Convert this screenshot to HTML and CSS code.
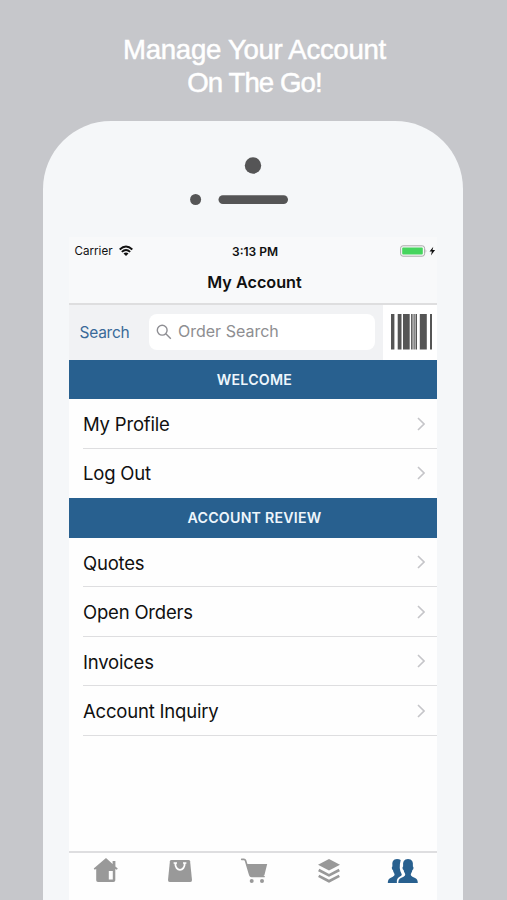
FILE: index.html
```html
<!DOCTYPE html>
<html lang="en">
<head>
<meta charset="utf-8">
<title>My Account</title>
<link rel="stylesheet" href="styles.css">
</head>
<body>
<h1 class="headline"><span class="line-one">Manage Your Account</span><br><span class="line-two">On The Go!</span></h1>
<main class="phone">
  <svg class="hardware" width="420" height="116" viewBox="43 121 420 116" fill="#555556">
    <circle cx="253" cy="165.5" r="8.2"/><circle cx="195.6" cy="199.5" r="5.5"/><rect x="218.5" y="195.2" width="69.5" height="8.8" rx="4.4"/>
  </svg>
  <div class="screen">
    <div class="status">
      <span class="carrier">Carrier</span>
      <svg class="wifi" width="14" height="12" viewBox="0 0 14 12" fill="none" stroke="#111" stroke-width="1.9"><path d="M.7 4.5Q7-1.3 13.3 4.5M2.8 6.9Q7 3.2 11.2 6.9"/><path d="M4.5 8.5Q7 6.5 9.5 8.5L7 11Z" fill="#111" stroke="none"/></svg>
      <span class="time">3:13 PM</span>
      <svg class="battery" width="36" height="12" viewBox="0 0 36 12"><rect x=".6" y=".8" width="24" height="10.4" rx="2.4" fill="#f8f8f8" stroke="#aaa"/><rect x="2.2" y="2.4" width="20.6" height="7.2" rx="1" fill="#46d55e"/><path d="M25.6 4q1.6 2 0 4z" fill="#aaa"/><path d="M33.3 1.7 29.5 6.5h2.4l-1 4 4.2-5.4h-2.6z" fill="#111"/></svg>
    </div>
    <div class="title"><span>My Account</span></div>
    <div class="search">
      <span class="search-label">Search</span>
      <div class="field">
        <svg width="16" height="16" viewBox="0 0 16 16" fill="none" stroke="#8e8e93" stroke-width="1.4"><circle cx="6.2" cy="6.2" r="4.9"/><path d="m9.8 9.8 5 5"/></svg>
        <span>Order Search</span>
      </div>
      <div class="barcode">
        <svg width="42" height="36" viewBox="391 314 42 36" fill="#555"><path d="M391 314h3.4v35.5H391zM397.7 314h3.8v35.5h-3.8zM403 314h6.7v35.5H403zM411.1 314h1.5v35.5h-1.5zM413.5 314h1.2v35.5h-1.2zM415.5 314h1.5v35.5h-1.5zM419.8 314h7v35.5h-7zM430 314h2v35.5h-2z"/></svg>
      </div>
    </div>
    <h2 class="section welcome"><span>WELCOME</span></h2>
    <div class="row"><span class="profile">My Profile</span><svg class="chevron" viewBox="0 0 8 14"><path d="m1 1 6 6-6 6"/></svg></div>
    <div class="row last"><span class="logout">Log Out</span><svg class="chevron" viewBox="0 0 8 14"><path d="m1 1 6 6-6 6"/></svg></div>
    <h2 class="section review"><span>ACCOUNT REVIEW</span></h2>
    <div class="row"><span class="quotes">Quotes</span><svg class="chevron" viewBox="0 0 8 14"><path d="m1 1 6 6-6 6"/></svg></div>
    <div class="row"><span class="orders">Open Orders</span><svg class="chevron" viewBox="0 0 8 14"><path d="m1 1 6 6-6 6"/></svg></div>
    <div class="row"><span class="invoices">Invoices</span><svg class="chevron" viewBox="0 0 8 14"><path d="m1 1 6 6-6 6"/></svg></div>
    <div class="row"><span class="inquiry">Account Inquiry</span><svg class="chevron" viewBox="0 0 8 14"><path d="m1 1 6 6-6 6"/></svg></div>
    <nav class="tabs">
      <svg viewBox="0 0 32 28"><path d="M16 1 3.7 11.500l1 1.300 1.500-.8v11.200q0 1.800 1.800 1.800h15.500q1.800 0 1.800-1.800V12l1.500.8 1-1.300-2.400-2V4h-2.800v3zM18.800 14h4v8.400h-4z" fill-rule="evenodd"/></svg>
      <svg viewBox="0 0 32 28"><path d="M7.3 3h17.4q1.2 0 1.4 1.2L28 23q.1 2-1.7 2H5.7Q3.9 25 4 23L5.9 4.2Q6.1 3 7.3 3Z"/><path d="M11.3 6c-.3 9.2 9.7 9.2 9.4 0" fill="none" stroke="#fff" stroke-width="1.8"/><path d="M9.6 5.2h3.4v1.5H9.6zM19 5.2h3.4v1.5H19z" fill="#fff"/></svg>
      <svg viewBox="0 0 32 28"><path d="M3.700 2.300h2.200q1.200 0 1.600 1.300l4.300 14.200q.5 1.700 1.800 1.700H26" fill="none" stroke="#999" stroke-width="1.700" stroke-linecap="round"/><path d="M8.500 7h20.700l-2.600 10.500q-.4 1.500-1.900 1.500H12z"/><circle cx="13.700" cy="24" r="2"/><circle cx="24" cy="24" r="2"/></svg>
      <svg viewBox="0 0 32 28"><path d="m16 2 11 5.7-11 5.8L5 7.7z"/><path d="m5.7 13 10.3 5.4L26.3 13M5.7 18.9 16 24.3l10.3-5.4" fill="none" stroke="#999" stroke-width="2.7" stroke-linejoin="round"/></svg>
      <svg class="people" viewBox="0 0 32 28"><path d="M.8 26q0-3.800 2.600-5 3-1.300 3.900-2.400.7-1.200-.3-2.600-.8-1.200-1-2.800-1.200-.7-1.200-2.200 0-1 .6-1.400Q4.200 2 10 2q2.300 0 3.700 1.100Q11.300 12 14.800 17.500q.2 1.200-2.600 2.600Q9.400 21.500 9.900 26z"/><path d="M11.300 26q0-3.900 2.600-5 3.300-1.300 4.100-2.500.6-1.200-.3-2.500-.8-1.300-1-2.800-1.200-.7-1.200-2.200 0-1 .6-1.400Q15.100 2 21 2t4.900 7.600q.6.4.6 1.400 0 1.500-1.200 2.200-.2 1.500-1 2.800-.9 1.300-.3 2.500.8 1.200 4.100 2.500 2.700 1.100 2.700 5z"/></svg>
    </nav>
  </div>
</main>
</body>
</html>
```
FILE: styles.css
```css
* { box-sizing: border-box; }
body { margin: 0; height: 900px; overflow: hidden; background: #c6c7cb; font-family: Inter, "Liberation Sans", sans-serif; color: #101010; }
.headline { margin: 0; height: 121px; padding-top: 33px; text-align: center; color: #fff; font: 400 27.6px/33px "Liberation Sans", sans-serif; -webkit-text-stroke: .5px #fff; }
.line-one { letter-spacing: -.3px; }
.line-two { letter-spacing: -.9px; }
.headline span { position: relative; left: 1px; top: -.5px; }
.phone { width: 420px; height: 779px; margin-left: 43px; background: #f5f7f9; border-radius: 68px 68px 0 0; display: flex; flex-direction: column; }
.hardware { display: block; flex: none; }
.screen { width: 368px; margin-left: 26px; height: 663px; background: #fefefe; display: flex; flex-direction: column; }
.screen > * { flex: none; }
.status { height: 28px; background: #f8f9fa; display: grid; grid-template-columns: 50px 113px 168px 37px; align-items: center; font-size: 11.6px; }
.carrier { padding-left: 5.5px; }
.time { font-weight: 600; white-space: nowrap; font-size: 12px; }
.title { height: 40px; background: #f8f9fa; border-bottom: 2px solid #dededf; text-align: center; font-size: 16.2px; font-weight: 600; line-height: 35px; padding-left: 3px; }
.search { height: 54.5px; display: flex; align-items: center; background: #f1f2f4; }
.search-label { width: 80px; padding-left: 10.5px; color: #396a99; font-size: 15.5px; letter-spacing: -.25px; }
.field { width: 226px; height: 36px; margin-right: 8px; background: #fff; border-radius: 8px; display: flex; align-items: center; gap: 6px; padding-left: 7px; font-size: 16px; color: #8e8e91; }
.field span { position: relative; top: -1px; }
.barcode { flex: 1; align-self: stretch; background: #fff; padding: 9px 0 0 8px; }
.section { height: 39.5px; margin: 0; background: #28608f; color: #eef6fc; text-align: center; font-size: 14.2px; line-height: 40px; font-weight: 600; padding-left: 3px; letter-spacing: .22px; }
.row { height: 49.5px; margin-left: 14px; border-bottom: 1px solid #dedee0; display: flex; align-items: center; justify-content: space-between; padding: 1.5px 12px 0 0; font-size: 18.5px; letter-spacing: -.2px; }
.row.last { border-bottom: 0; padding-top: 0; }
.chevron { width: 8px; height: 14px; margin-top: -1px; fill: none; stroke: #c5c5c9; stroke-width: 1.6; }
.tabs { margin-top: auto; height: 49px; border-top: 2px solid #dedee0; display: flex; justify-content: space-between; padding: 4px 18px 0 20.5px; }
.tabs svg { width: 32px; height: 28px; fill: #999; }
.tabs .people { fill: #28608f; }
```
